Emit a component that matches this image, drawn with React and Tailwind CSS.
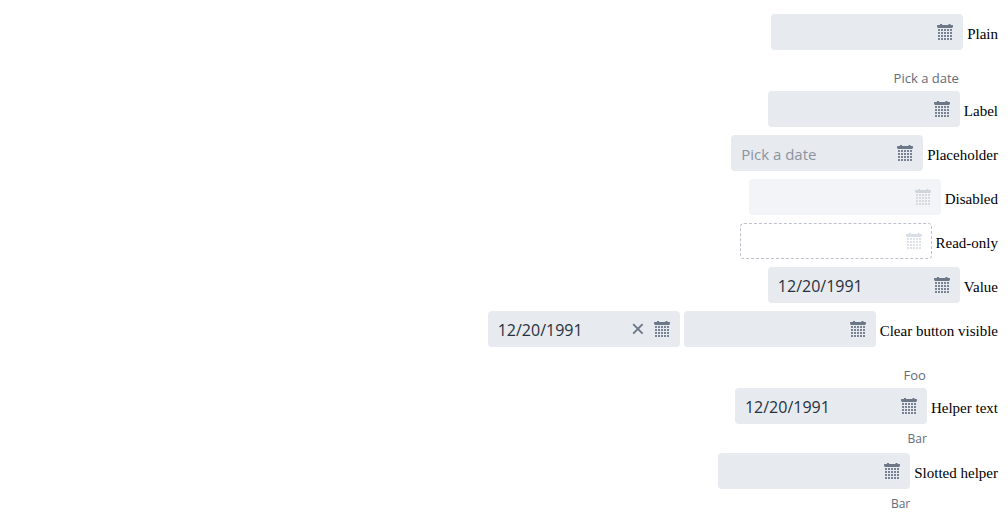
import { useId } from "react";

function CalendarIcon() {
  const columns = [1, 4, 7, 10, 13];
  const rows = [5, 8, 11, 14];
  return (
    <svg viewBox="0 0 16 16" className="size-4" fill="currentColor" aria-hidden="true">
      <path d="M0 1.6Q0 1 .6 1H3V0H5V1H11.5V0H13.5V1H15.4Q16 1 16 1.6V2.6Q16 4 14.8 4H1.2Q0 4 0 2.6z" />
      {rows.map((y) =>
        columns.map((x) => <rect key={x + "-" + y} x={x} y={y} width="2" height="2" opacity="0.9" />)
      )}
    </svg>
  );
}

function ClearIcon() {
  return (
    <svg viewBox="0 0 12 12" className="size-3" fill="none" stroke="currentColor" strokeWidth="1.9" aria-hidden="true">
      <path d="M1.2 1.2l9.4 9.4M10.6 1.2l-9.4 9.4" />
    </svg>
  );
}

const boxStyles = {
  normal: "bg-[#e7eaee] text-[#6c7787]",
  disabled: "bg-[#f3f4f8] text-[#d1d6dd]",
  readOnly: "border border-dashed border-[#bcc2cb] text-[#dadee5]",
};

function DatePicker({ name, label, helper, value = "", placeholder, state = "normal", clearable }) {
  const id = useId();
  return (
    <div className="w-48 shrink-0 font-['Open_Sans','Noto_Sans',sans-serif]">
      {label && (
        <label htmlFor={id} className="block h-[33px] pt-4 pr-px text-right text-[13px] leading-4 text-[#626c7c]">
          {label}
        </label>
      )}
      <div className="py-1">
        <div className={"flex h-9 items-center rounded-[4px] " + boxStyles[state]}>
          <input
            id={id}
            type="text"
            aria-label={label ? undefined : name}
            defaultValue={value}
            placeholder={placeholder}
            disabled={state === "disabled"}
            readOnly={state === "readOnly"}
            className="h-full min-w-0 flex-1 bg-transparent pt-0.5 pl-2.5 text-base text-[#263140] outline-none placeholder:text-[15px] placeholder:text-[#8c94a1]"
          />
          {clearable && (
            <button type="button" aria-label="Clear" className="mr-2.5 shrink-0">
              <ClearIcon />
            </button>
          )}
          <button
            type="button"
            aria-label="Open calendar"
            disabled={state !== "normal"}
            className={"shrink-0 " + (state === "readOnly" ? "mr-[9px]" : "mr-2.5")}
          >
            <CalendarIcon />
          </button>
        </div>
      </div>
      {helper && <p className="h-[21px] pt-[3px] text-right text-[12px] leading-4 text-[#626c7c]">{helper}</p>}
    </div>
  );
}

function Row({ title, labelled, children }) {
  return (
    <section className="flex items-start justify-end gap-1">
      {children}
      <h2 className={"text-[15px] leading-5 whitespace-nowrap text-black " + (labelled ? "pt-[47px]" : "pt-3.5")}>
        {title}
      </h2>
    </section>
  );
}

export default function App() {
  return (
    <main className="bg-white p-2.5 font-['Liberation_Serif',serif]">
      <Row title="Plain">
        <DatePicker name="Plain" />
      </Row>
      <Row title="Label" labelled>
        <DatePicker name="Label" label="Pick a date" />
      </Row>
      <Row title="Placeholder">
        <DatePicker name="Placeholder" placeholder="Pick a date" />
      </Row>
      <Row title="Disabled">
        <DatePicker name="Disabled" state="disabled" />
      </Row>
      <Row title="Read-only">
        <DatePicker name="Read-only" state="readOnly" />
      </Row>
      <Row title="Value">
        <DatePicker name="Value" value="12/20/1991" />
      </Row>
      <Row title="Clear button visible">
        <DatePicker name="Clear button visible, filled" value="12/20/1991" clearable />
        <DatePicker name="Clear button visible" />
      </Row>
      <Row title="Helper text" labelled>
        <DatePicker name="Helper text" label="Foo" value="12/20/1991" helper="Bar" />
      </Row>
      <Row title="Slotted helper">
        <DatePicker name="Slotted helper" helper="Bar" />
      </Row>
    </main>
  );
}
